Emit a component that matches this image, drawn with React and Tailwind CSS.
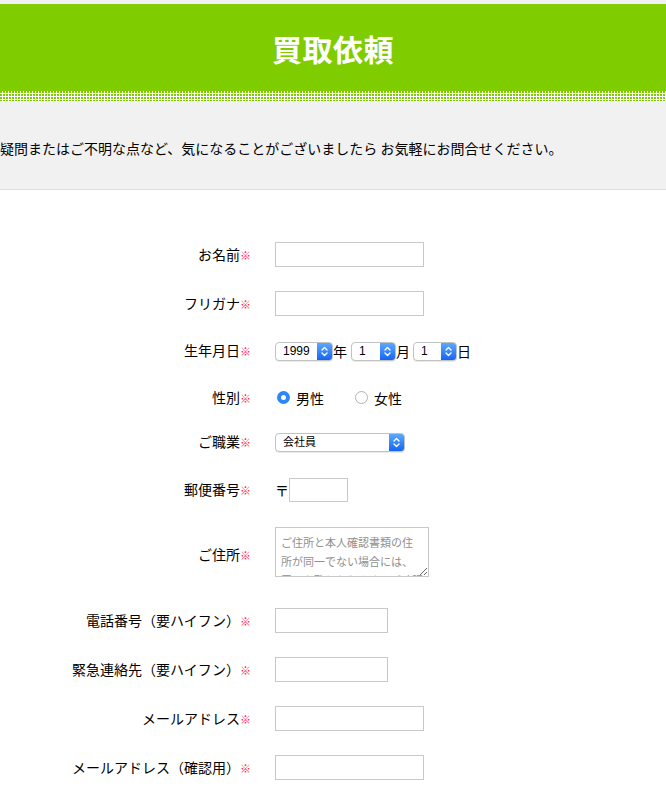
import React from "react";

function Req() {
  return <span className="text-[11px] text-[#ff2450]">※</span>;
}

function Chevrons() {
  return (
    <svg width="7" height="11" viewBox="0 0 7 11" fill="none" stroke="#fff" strokeWidth="1.4" strokeLinecap="round" strokeLinejoin="round">
      <path d="M1 4 L3.5 1.5 L6 4" />
      <path d="M1 7 L3.5 9.5 L6 7" />
    </svg>
  );
}

function MacSelect({ value, className }) {
  return (
    <div className={`flex h-[19px] overflow-hidden rounded-[4px] border border-[#c2c2c2] bg-white shadow-[0_1px_0_rgba(0,0,0,0.08)] ${className}`}>
      <span className="flex-1 pl-[7px] text-[12px] leading-[17px] text-black [font-family:'Liberation_Sans','Noto_Sans_CJK_JP',sans-serif]">{value}</span>
      <span className="flex w-[15px] items-center justify-center bg-gradient-to-b from-[#5ca8ff] to-[#1464f2]">
        <Chevrons />
      </span>
    </div>
  );
}

function Row({ label, h, children, align = "items-center" }) {
  return (
    <div className={`flex ${align} ${h}`}>
      <div className="mt-[-1px] w-[251px] text-right text-[14px] leading-[20px] text-[#000]">
        {label}
        <Req />
      </div>
      <div className="flex items-center pl-[24px]">{children}</div>
    </div>
  );
}

function TextInput({ w }) {
  return <div className={`h-[25px] border border-[#c9c9c9] bg-white ${w}`} />;
}

export default function App() {
  return (
    <div className="w-[666px] bg-white [font-family:'Noto_Sans_CJK_JP','Noto_Sans',sans-serif]">
      <div className="h-[4px] bg-[#f0f0f0]" />
      <div className="flex h-[87px] items-center justify-center bg-[#7fcc00]">
        <h1 className="text-[30px] font-bold leading-[36px] tracking-[0.5px] text-white">買取依頼</h1>
      </div>
      <div className="h-[10px] bg-[#7fcc00] bg-[linear-gradient(90deg,transparent_2px,#ffffff_2px),linear-gradient(transparent_2px,#ffffff_2px)] bg-[length:3px_3px]" />
      <div className="h-[89px] overflow-hidden border-b border-[#dedede] bg-[#f1f1f1] pt-[37px]">
        <p className="ml-[-14px] whitespace-nowrap text-[14px] leading-[20px] text-[#000]">
          ご疑問またはご不明な点など、気になることがございましたら お気軽にお問合せください。
        </p>
      </div>

      <div className="pt-[40px]">
        <Row label="お名前" h="h-[49px]">
          <TextInput w="w-[149px]" />
        </Row>
        <Row label="フリガナ" h="h-[49px]">
          <TextInput w="w-[149px]" />
        </Row>
        <Row label="生年月日" h="h-[46px]">
          <div className="flex items-center text-[14px] leading-[20px] text-[#000]">
            <MacSelect value="1999" className="w-[58px]" />
            <span>年</span>
            <MacSelect value="1" className="ml-[4px] w-[45px]" />
            <span>月</span>
            <MacSelect value="1" className="ml-[3px] w-[44px]" />
            <span>日</span>
          </div>
        </Row>
        <Row label="性別" h="h-[47px]">
          <div className="flex items-center text-[14px] leading-[20px] text-[#000]">
            <span className="ml-[2px] flex h-[13px] w-[13px] items-center justify-center rounded-full bg-[#2f86f6]">
              <span className="h-[5px] w-[5px] rounded-full bg-white" />
            </span>
            <span className="ml-[6px]">男性</span>
            <span className="ml-[31px] h-[13px] w-[13px] rounded-full border border-[#b3b3b3] bg-white" />
            <span className="ml-[6px]">女性</span>
          </div>
        </Row>
        <Row label="ご職業" h="h-[42px]">
          <MacSelect value="会社員" className="h-[18px] w-[130px] [&>span:first-child]:text-[11px]" />
        </Row>
        <Row label="郵便番号" h="h-[54px]">
          <div className="flex items-center">
            <span className="w-[14px] text-[14px] leading-[20px] text-[#000]">〒</span>
            <div className="h-[24px] w-[59px] border border-[#c9c9c9] bg-white" />
          </div>
        </Row>
        <div className="flex h-[79px] items-start">
          <div className="mt-[27px] w-[251px] text-right text-[14px] leading-[20px] text-[#000]">
            ご住所
            <Req />
          </div>
          <div className="pl-[24px] pt-[10px]">
            <textarea
              readOnly
              className="block h-[50px] w-[154px] resize overflow-hidden border border-[#c9c9c9] bg-white px-[5px] pt-[5px] text-[11px] leading-[19px] outline-none placeholder:text-[#8f8f8f]"
              placeholder="ご住所と本人確認書類の住所が同一でない場合には、買取を致しかねます。ご確認ください。"
            />
          </div>
        </div>
        <Row label="電話番号（要ハイフン）" h="h-[49px]">
          <TextInput w="w-[113px]" />
        </Row>
        <Row label="緊急連絡先（要ハイフン）" h="h-[49px]">
          <TextInput w="w-[113px]" />
        </Row>
        <Row label="メールアドレス" h="h-[49px]">
          <TextInput w="w-[149px]" />
        </Row>
        <Row label="メールアドレス（確認用）" h="h-[49px]">
          <TextInput w="w-[149px]" />
        </Row>
      </div>
    </div>
  );
}
